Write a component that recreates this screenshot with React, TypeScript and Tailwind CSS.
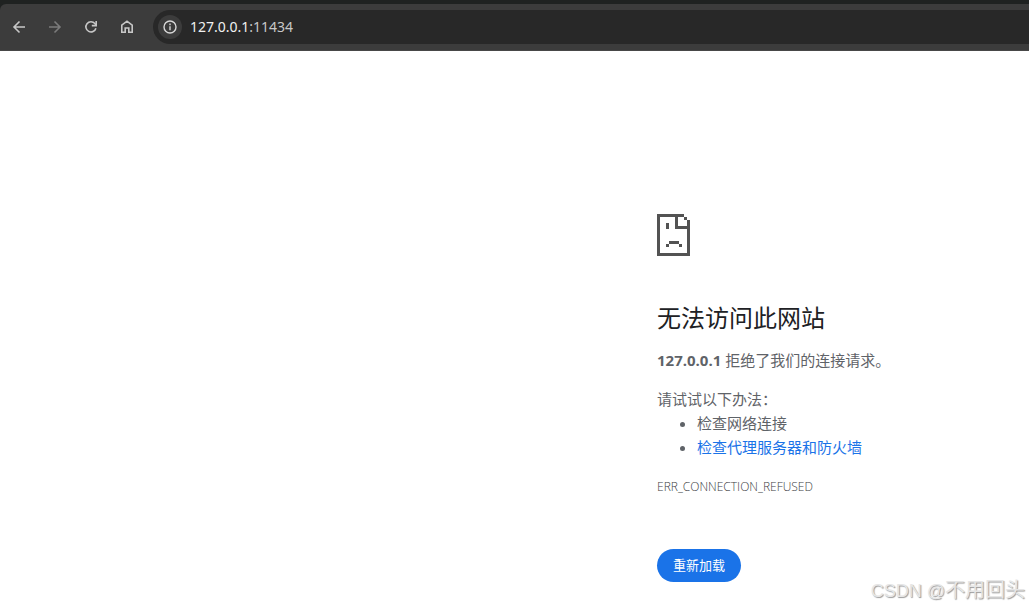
import React from 'react';

const navButton = 'flex h-9 w-9 items-center justify-center';

const ArrowIcon = () => (
  <svg width="16" height="16" viewBox="0 0 16 16" fill="none" aria-hidden="true">
    <path
      d="M14 8H3M8.5 2.5L3 8l5.5 5.5"
      stroke="currentColor"
      strokeWidth="1.6"
    />
  </svg>
);

const ReloadIcon = () => (
  <svg width="16" height="16" viewBox="0 0 16 16" fill="none" aria-hidden="true">
    <path
      d="M12.9 9.2A5.1 5.1 0 1 1 11.9 4.6L13 5.8"
      stroke="currentColor"
      strokeWidth="1.6"
    />
    <path d="M13.2 2v4.6H8.8" stroke="currentColor" strokeWidth="1.6" />
  </svg>
);

const HomeIcon = () => (
  <svg width="16" height="16" viewBox="0 0 16 16" fill="none" aria-hidden="true">
    <path
      d="M2.8 6.2L8 2.2l5.2 4v7.1H9.8V9H6.2v4.3H2.8z"
      stroke="currentColor"
      strokeWidth="1.6"
    />
  </svg>
);

const InfoIcon = () => (
  <svg width="16" height="16" viewBox="0 0 16 16" fill="none" aria-hidden="true">
    <circle cx="8" cy="8" r="6" stroke="currentColor" strokeWidth="1.4" />
    <path d="M8 7.2v4M8 4.6v1.6" stroke="currentColor" strokeWidth="1.4" />
  </svg>
);

const SadPageIcon = () => (
  <svg
    className="text-[#535353]"
    width="33"
    height="42"
    viewBox="0 0 33 42"
    fill="currentColor"
    shapeRendering="crispEdges"
    aria-hidden="true"
  >
    <path
      d="M0 0h27v3h-6v9h9V6h3v36H0zM3 3v36h27V15H18V3z"
      fillRule="evenodd"
    />
    <path d="M27 3h3v3h-3zM9 9h3v6H9zM12 27h10v3H12zM9 30h3v3H9zM22 30h3v3h-3z" />
  </svg>
);

const Toolbar = () => {
  const [address, setAddress] = React.useState('127.0.0.1:11434');
  const [focused, setFocused] = React.useState(false);
  const [host, port] = address.split(':');

  return (
    <header className="bg-[#1f2221] pt-1">
      <div className="flex h-[47px] items-center rounded-tl-md border-b border-[#484848] bg-[#3c3c3c] pl-px text-[#c7c7c7]">
        <nav className="flex">
          <button type="button" className={navButton} aria-label="后退">
            <ArrowIcon />
          </button>
          <button
            type="button"
            className={`${navButton} rotate-180 text-[#7b7b7b]`}
            aria-label="前进"
            disabled
          >
            <ArrowIcon />
          </button>
          <button type="button" className={navButton} aria-label="重新加载页面">
            <ReloadIcon />
          </button>
          <button type="button" className={navButton} aria-label="主页">
            <HomeIcon />
          </button>
        </nav>

        <div className="ml-2 flex h-[34px] flex-1 items-center gap-2 rounded-l-full bg-[#282828] pl-[5px]">
          <button
            type="button"
            className="flex h-6 w-6 items-center justify-center rounded-full bg-[#3c3c3c] text-[#d8d8d8]"
            aria-label="查看网站信息"
          >
            <InfoIcon />
          </button>
          {focused ? (
            <input
              className="flex-1 bg-transparent font-['Noto_Sans',sans-serif] text-sm text-[#e8e8e8] outline-none"
              aria-label="地址"
              value={address}
              autoFocus
              onChange={(event) => setAddress(event.target.value)}
              onBlur={() => setFocused(false)}
            />
          ) : (
            <button
              type="button"
              className="flex-1 cursor-text text-left font-['Noto_Sans',sans-serif] text-sm text-[#f0f0f0]"
              onClick={() => setFocused(true)}
            >
              {host}
              {port && <span className="text-[#c7c7c7]">:{port}</span>}
            </button>
          )}
        </div>
      </div>
    </header>
  );
};

const App = () => {
  return (
    <div className="relative flex min-h-screen flex-col bg-white font-['Open_Sans','Noto_Sans_CJK_SC',sans-serif]">
      <Toolbar />

      <main className="flex flex-1 justify-end pt-[163px] text-[15px] leading-6 text-[#5f6368]">
        <section className="w-[372px]">
          <SadPageIcon />

          <h1 className="mt-[47px] text-2xl leading-[30px] text-[#202124]">
            无法访问此网站
          </h1>
          <p className="mt-4 leading-[22px]">
            <strong className="font-bold">127.0.0.1</strong>{' '}
            拒绝了我们的连接请求。
          </p>

          <p className="mt-4">请试试以下办法：</p>
          <ul className="list-disc pl-10">
            <li>检查网络连接</li>
            <li>
              <a className="text-[#1a73e8]" href="#buttons">
                检查代理服务器和防火墙
              </a>
            </li>
          </ul>

          <p className="mt-4 text-xs leading-6 font-light text-[#3c4043]">
            ERR_CONNECTION_REFUSED
          </p>

          <button
            id="buttons"
            type="button"
            className="mt-[50px] cursor-pointer rounded-full bg-[#1a73e8] px-4 py-2 text-[13px] leading-[17px] text-white"
            onClick={() => window.location.reload()}
          >
            重新加载
          </button>
        </section>
      </main>

      <span className="absolute right-1 bottom-1 font-['Noto_Sans_CJK_SC',sans-serif] text-xl leading-7 text-[#e6e6e6] [text-shadow:1px_1px_1px_#999999]">
        <span className="font-['Liberation_Sans',sans-serif] text-lg">
          CSDN @
        </span>
        不用回头
      </span>
    </div>
  );
};

export default App;
